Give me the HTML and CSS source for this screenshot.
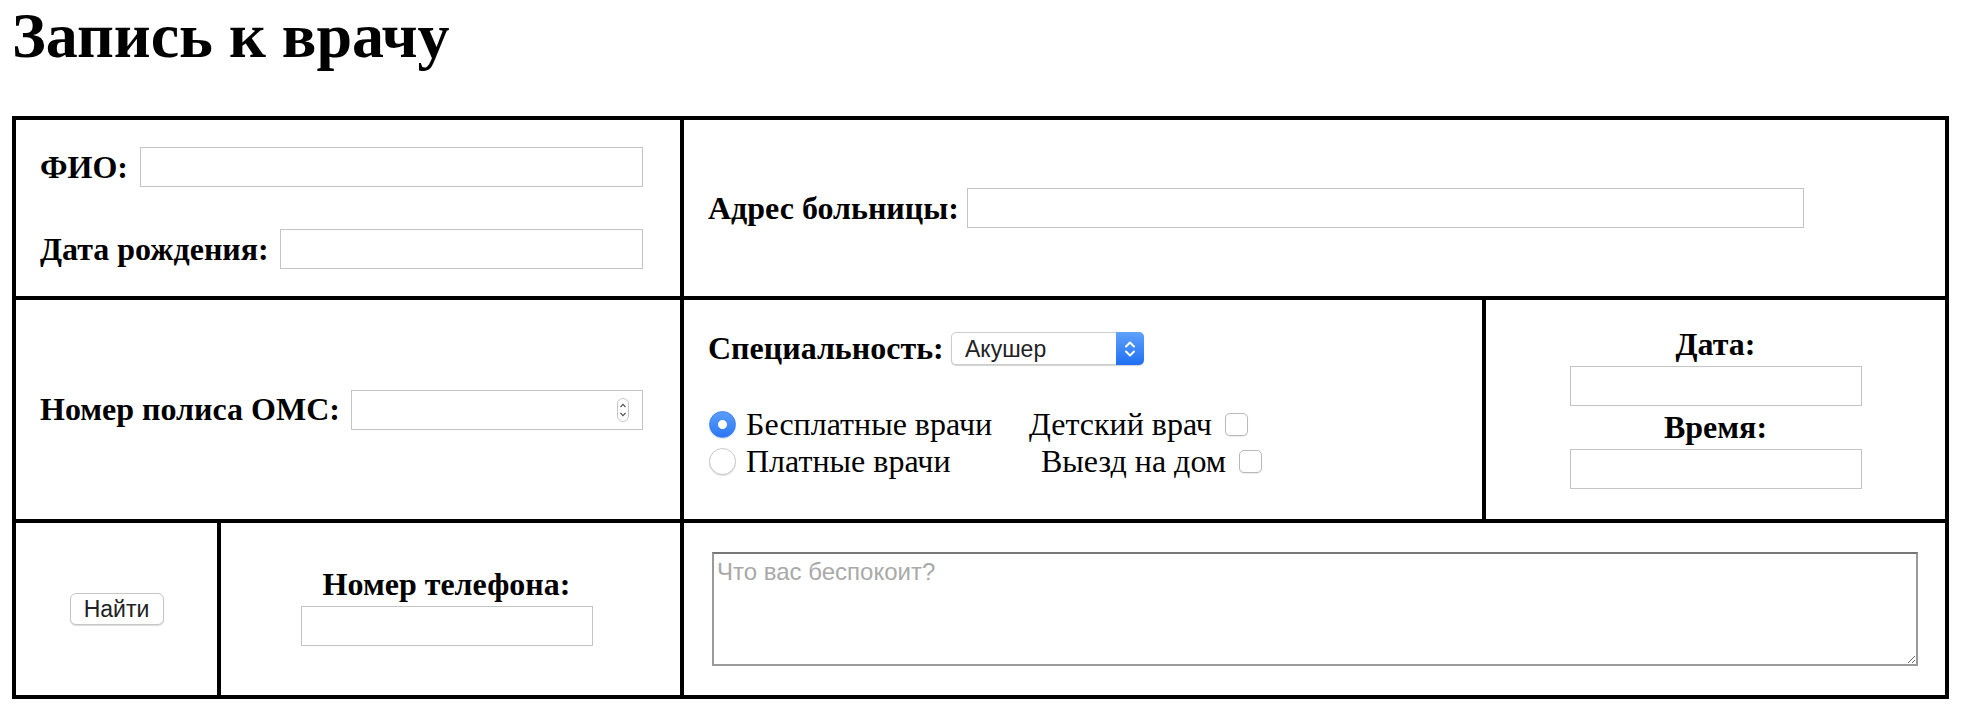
FILE: index.html
```html
<!DOCTYPE html>
<html lang="ru">
<head>
<meta charset="utf-8">
<title>Запись к врачу</title>
<link rel="stylesheet" href="styles.css">
</head>
<body>
<h1 class="title">Запись к врачу</h1>
<form class="form">
  <div class="cell cell-person">
    <div class="field-row">
      <label class="lbl" for="fio">ФИО:</label>
      <input class="text-input w-fio" id="fio" type="text">
    </div>
    <div class="field-row">
      <label class="lbl" for="dob">Дата рождения:</label>
      <input class="text-input w-dob" id="dob" type="text">
    </div>
  </div>
  <div class="cell cell-address">
    <label class="lbl" for="addr">Адрес больницы:</label>
    <input class="text-input w-address" id="addr" type="text">
  </div>
  <div class="cell cell-policy">
    <div class="field-row">
      <label class="lbl" for="oms">Номер полиса ОМС:</label>
      <span class="number-wrap">
        <input class="text-input w-std" id="oms" type="text" inputmode="numeric">
        <svg class="spinner" width="12" height="24" viewBox="0 0 12 24" aria-hidden="true">
          <rect x="0.5" y="0.5" width="11" height="23" rx="5.5" fill="#fff" stroke="#c6c6c6"/>
          <path d="M3.5 9 L6 6.4 L8.5 9" fill="none" stroke="#555" stroke-width="1.2"/>
          <path d="M3.5 15 L6 17.6 L8.5 15" fill="none" stroke="#555" stroke-width="1.2"/>
        </svg>
      </span>
    </div>
  </div>
  <div class="cell cell-doctor">
    <div class="spec-row">
      <label class="lbl" for="spec">Специальность:</label>
      <span class="select-wrap">
        <select class="select" id="spec"><option>Акушер</option></select>
        <span class="select-btn" aria-hidden="true">
          <svg width="12" height="22" viewBox="0 0 12 22">
            <path d="M2 8.5 L6 4.5 L10 8.5" fill="none" stroke="#fff" stroke-width="2" stroke-linecap="round" stroke-linejoin="round"/>
            <path d="M2 13.5 L6 17.5 L10 13.5" fill="none" stroke="#fff" stroke-width="2" stroke-linecap="round" stroke-linejoin="round"/>
          </svg>
        </span>
      </span>
    </div>
    <div class="options">
      <label class="opt"><input type="radio" name="pay" class="radio" checked>Бесплатные врачи</label>
      <label class="opt">Детский врач<input type="checkbox" class="check"></label>
      <label class="opt"><input type="radio" name="pay" class="radio">Платные врачи</label>
      <label class="opt opt-shift">Выезд на дом<input type="checkbox" class="check"></label>
    </div>
  </div>
  <div class="cell cell-when">
    <label class="lbl stacked" for="date">Дата:</label>
    <input class="text-input w-std" id="date" type="text">
    <label class="lbl stacked" for="time">Время:</label>
    <input class="text-input w-std" id="time" type="text">
  </div>
  <div class="cell cell-search">
    <button type="button" class="btn">Найти</button>
  </div>
  <div class="cell cell-phone">
    <label class="lbl stacked" for="phone">Номер телефона:</label>
    <input class="text-input w-std" id="phone" type="text">
  </div>
  <div class="cell cell-complaint">
    <textarea class="complaint" placeholder="Что вас беспокоит?"></textarea>
  </div>
</form>
</body>
</html>
```
FILE: styles.css
```css
html, body {
  margin: 0;
  background: #fff;
}
body {
  font-family: "Liberation Serif", "Times New Roman", serif;
  font-size: 32px;
  color: #000;
  padding: 0 12px;
}
.title {
  font-size: 64px;
  font-weight: bold;
  line-height: 72px;
  margin: 0 0 44px;
}
.form {
  display: grid;
  width: 1937px;
  box-sizing: border-box;
  padding: 4px;
  gap: 4px;
  background: #000;
  grid-template-columns: 201px 459px 798px 459px;
  grid-template-rows: 176px 219px 172px;
}
.cell {
  background: #fff;
  min-width: 0;
}
.lbl {
  font-weight: bold;
  white-space: nowrap;
}
.text-input {
  display: block;
  box-sizing: border-box;
  height: 40px;
  margin: 0;
  padding: 0 6px;
  border: 1px solid #c4c4c4;
  border-radius: 0;
  background: #fff;
  font: 22px "Liberation Sans", Arial, sans-serif;
  outline: none;
}
.w-fio { width: 503px; }
.w-dob { width: 363px; }
.w-std { width: 292px; }
.w-address { width: 837px; }

.field-row {
  display: flex;
  align-items: center;
  justify-content: space-between;
}
.cell-person {
  grid-column: 1 / 3;
  display: flex;
  flex-direction: column;
  justify-content: center;
  gap: 42px;
  padding: 0 37px 0 24px;
}
.cell-address {
  grid-column: 3 / 5;
  display: flex;
  align-items: center;
  justify-content: space-between;
  padding: 0 141px 0 24px;
}
.cell-policy {
  grid-column: 1 / 3;
  display: flex;
  flex-direction: column;
  justify-content: center;
  padding: 0 37px 0 24px;
}
.number-wrap {
  position: relative;
  display: block;
  height: 40px;
}
.spinner {
  position: absolute;
  right: 14px;
  top: 8px;
}
.cell-doctor {
  grid-column: 3;
  padding: 30px 0 0 24px;
}
.spec-row {
  display: grid;
  grid-template-columns: 243px 193px;
  align-items: center;
  height: 33px;
}
.select-wrap {
  position: relative;
  display: block;
  width: 193px;
  height: 33px;
}
.select {
  display: block;
  appearance: none;
  -webkit-appearance: none;
  box-sizing: border-box;
  width: 193px;
  height: 33px;
  margin: 0;
  padding: 0 0 0 13px;
  border: 1px solid #cdcdcd;
  border-radius: 5px;
  background: #fff;
  box-shadow: 0 1px 1px rgba(0, 0, 0, 0.18);
  color: #222;
  font: 23px "Liberation Sans", Arial, sans-serif;
  outline: none;
}
.select-btn {
  position: absolute;
  right: 0;
  top: 0;
  width: 28px;
  height: 33px;
  border-radius: 0 5px 5px 0;
  background: linear-gradient(#5fa2fa, #1f6ff3);
  display: flex;
  align-items: center;
  justify-content: center;
  pointer-events: none;
}
.options {
  display: grid;
  grid-template-columns: 321px auto;
  margin-top: 43px;
  line-height: 37px;
}
.opt {
  display: flex;
  align-items: center;
  white-space: nowrap;
}
.opt-shift {
  padding-left: 12px;
}
.radio {
  appearance: none;
  -webkit-appearance: none;
  box-sizing: border-box;
  width: 27px;
  height: 27px;
  margin: 0 10px 0 1px;
  border-radius: 50%;
  border: 1px solid #c8c8c8;
  background: #fff;
  box-shadow: 0 1px 1px rgba(0, 0, 0, 0.12);
}
.radio:checked {
  border-color: #3a84f6;
  background:
    radial-gradient(circle, #fff 0 4px, rgba(255, 255, 255, 0) 5px),
    linear-gradient(#5b9ef9, #2b77f4);
}
.check {
  appearance: none;
  -webkit-appearance: none;
  box-sizing: border-box;
  width: 23px;
  height: 23px;
  margin: 0 0 0 13px;
  border: 1px solid #b9b9b9;
  border-radius: 5px;
  background: #fff;
  box-shadow: 0 1px 1px rgba(0, 0, 0, 0.08);
}
.cell-when {
  grid-column: 4;
  display: flex;
  flex-direction: column;
  align-items: center;
  padding-top: 23px;
}
.stacked {
  line-height: 43px;
}
.cell-search {
  grid-column: 1;
  display: flex;
  align-items: center;
  justify-content: center;
}
.btn {
  box-sizing: border-box;
  width: 94px;
  height: 32px;
  margin: 0;
  padding: 0;
  border: 1px solid #c6c6c6;
  border-radius: 6px;
  background: #fff;
  box-shadow: 0 1px 1px rgba(0, 0, 0, 0.15);
  color: #222;
  font: 23px "Liberation Sans", Arial, sans-serif;
}
.cell-phone {
  grid-column: 2;
  display: flex;
  flex-direction: column;
  align-items: center;
  padding: 40px 8px 0 0;
}
.cell-complaint {
  grid-column: 3 / 5;
  display: flex;
  align-items: center;
  padding-left: 28px;
}
.complaint {
  box-sizing: border-box;
  width: 1206px;
  height: 114px;
  margin: 0;
  padding: 4px 3px;
  border: 2px solid #9a9a9a;
  border-top-color: #777;
  border-radius: 0;
  font: 24px "Liberation Sans", Arial, sans-serif;
  background: #fff;
  outline: none;
}
.complaint::placeholder {
  color: #a9a9a9;
}
```
